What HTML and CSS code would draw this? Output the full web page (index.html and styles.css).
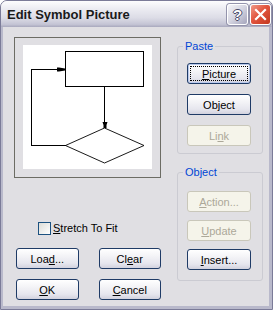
FILE: index.html
```html
<!DOCTYPE html>
<html lang="en">
<head>
    <meta charset="UTF-8">
    <title>Edit Symbol Picture</title>
    <link rel="stylesheet" href="styles.css">
</head>
<body>
    <div class="window">
        <div class="titlebar">
            <span class="caption">Edit Symbol Picture</span>
            <div class="caption-buttons">
                <span class="cap-btn help">?</span>
                <span class="cap-btn close">
                    <svg width="13" height="13" viewBox="0 0 13 13">
                        <path d="M2 2L11 11M11 2L2 11" stroke="#fff" stroke-width="2.2" stroke-linecap="square"/>
                    </svg>
                </span>
            </div>
        </div>

        <div class="client">
            <div class="left-col">
                <div class="preview">
                    <div class="canvas">
                        <svg width="129" height="124" viewBox="0 0 129 124">
                            <rect x="42.5" y="6.5" width="78" height="35" fill="none" stroke="#000" shape-rendering="crispEdges"/>
                            <path d="M81.5 41.5V80" stroke="#000" fill="none" shape-rendering="crispEdges"/>
                            <path d="M79.5 77h5l-1 3v3h-3v-3z" fill="#000"/>
                            <path d="M42.5 100.5H8.5V24.5H36" stroke="#000" fill="none" shape-rendering="crispEdges"/>
                            <path d="M34 22.5h2l6 1v2l-6 1h-2z" fill="#000"/>
                            <polygon points="81.5,83 121,100.5 81.5,118 42.5,100.5" fill="none" stroke="#000" stroke-width="0.9"/>
                        </svg>
                    </div>
                </div>

                <label class="check"><span class="box"></span><span class="check-text"><u>S</u>tretch To Fit</span></label>

                <div class="btn-row">
                    <button class="btn">Loa<u>d</u>...</button>
                    <button class="btn">Cl<u>e</u>ar</button>
                </div>
                <div class="btn-row">
                    <button class="btn"><u>O</u>K</button>
                    <button class="btn"><u>C</u>ancel</button>
                </div>
            </div>

            <div class="right-col">
                <fieldset class="group paste">
                    <legend>Paste</legend>
                    <button class="btn default"><u>P</u>icture</button>
                    <button class="btn">Ob<u>j</u>ect</button>
                    <button class="btn" disabled>Li<u>n</u>k</button>
                </fieldset>
                <fieldset class="group object">
                    <legend>Object</legend>
                    <button class="btn" disabled><u>A</u>ction...</button>
                    <button class="btn" disabled><u>U</u>pdate</button>
                    <button class="btn"><u>I</u>nsert...</button>
                </fieldset>
            </div>
        </div>
    </div>
</body>
</html>
```

FILE: styles.css
```css
body {
    margin: 0;
    padding: 0;
    background: #fff;
}

.window {
    width: 273px;
    height: 310px;
    box-sizing: border-box;
    border: 1px solid #7b7b98;
    border-radius: 7px 7px 0 0;
    background: #e0dfe3;
    font-family: "Liberation Sans", Arial, sans-serif;
    font-size: 11px;
    color: #000;
    display: flex;
    flex-direction: column;
}

.titlebar {
    height: 26px;
    display: flex;
    align-items: center;
    justify-content: space-between;
    padding: 0 1px 0 6px;
    border-radius: 6px 6px 0 0;
    background: linear-gradient(#fdfdfe 0%, #ececf2 30%, #dcdce6 65%, #c4c4d4 90%, #a8a8bd 100%);
}

.caption {
    font-size: 13px;
    font-weight: bold;
    color: #1a1a1a;
}

.caption-buttons {
    display: flex;
    gap: 2px;
}

.cap-btn {
    width: 21px;
    height: 21px;
    box-sizing: border-box;
    border: 1px solid #fff;
    border-radius: 3px;
    display: flex;
    align-items: center;
    justify-content: center;
    box-shadow: 0 0 0 1px #9494ac;
}

.help {
    background: linear-gradient(135deg, #f4f4f8 0%, #d4d4e0 50%, #a4a4bc 100%);
    color: #fff;
    font-size: 15px;
    font-weight: bold;
    text-shadow: 1px 0 #4a4a66, -1px 0 #4a4a66, 0 1px #4a4a66, 0 -1px #4a4a66;
}

.close {
    background: linear-gradient(135deg, #f09a88 0%, #e2553e 45%, #c3381f 100%);
}

.client {
    flex: 1;
    display: flex;
    border: solid #b9b9cb;
    border-width: 0 3px 3px 2px;
    padding: 10px 0 0 11px;
}

.left-col {
    width: 147px;
    display: flex;
    flex-direction: column;
}

.preview {
    border: 1px solid #6c6c64;
    padding: 7px 8px 8px 8px;
}

.canvas {
    width: 129px;
    height: 124px;
    background: #fff;
}

.canvas svg {
    display: block;
}

.check {
    display: flex;
    align-items: center;
    gap: 2px;
    margin: 44px 0 0 24px;
    height: 13px;
    line-height: 13px;
}

.check .box {
    width: 13px;
    height: 13px;
    box-sizing: border-box;
    border: 1px solid #1c5180;
    background: linear-gradient(135deg, #dcdcd7, #fff);
}

.btn-row {
    display: flex;
    gap: 20px;
    margin: 13px 0 0 2px;
}

.btn-row + .btn-row {
    margin-top: 10px;
}

.btn {
    width: 64px;
    height: 21px;
    box-sizing: border-box;
    padding: 0;
    border: 1px solid #1f3b66;
    border-radius: 3px;
    background: linear-gradient(#ffffff 0%, #f4f4f7 35%, #e6e6ee 75%, #d2d2de 100%);
    font-family: "Liberation Sans", Arial, sans-serif;
    font-size: 11px;
    color: #000;
}

.btn:disabled {
    border-color: #c9c7ba;
    background: #f5f4ea;
    color: #aca899;
}

.btn.default {
    box-shadow: inset 0 0 0 1px #b9c9ec;
    outline: 1px dotted #000;
    outline-offset: -4px;
}

.right-col {
    margin-left: 16px;
    width: 86px;
    display: flex;
    flex-direction: column;
}

.group {
    margin: 0;
    border: 1px solid #cbcbd2;
    border-radius: 3px;
    display: flex;
    flex-direction: column;
}

.group legend {
    color: #0046d5;
    line-height: 13px;
    padding: 0 2px;
    margin-left: -4px;
}

.paste {
    margin-top: 3px;
    padding: 10px 11px 7px 9px;
    gap: 10px;
}

.object {
    margin-top: 12px;
    padding: 12px 11px 10px 9px;
    gap: 8px;
}
```
